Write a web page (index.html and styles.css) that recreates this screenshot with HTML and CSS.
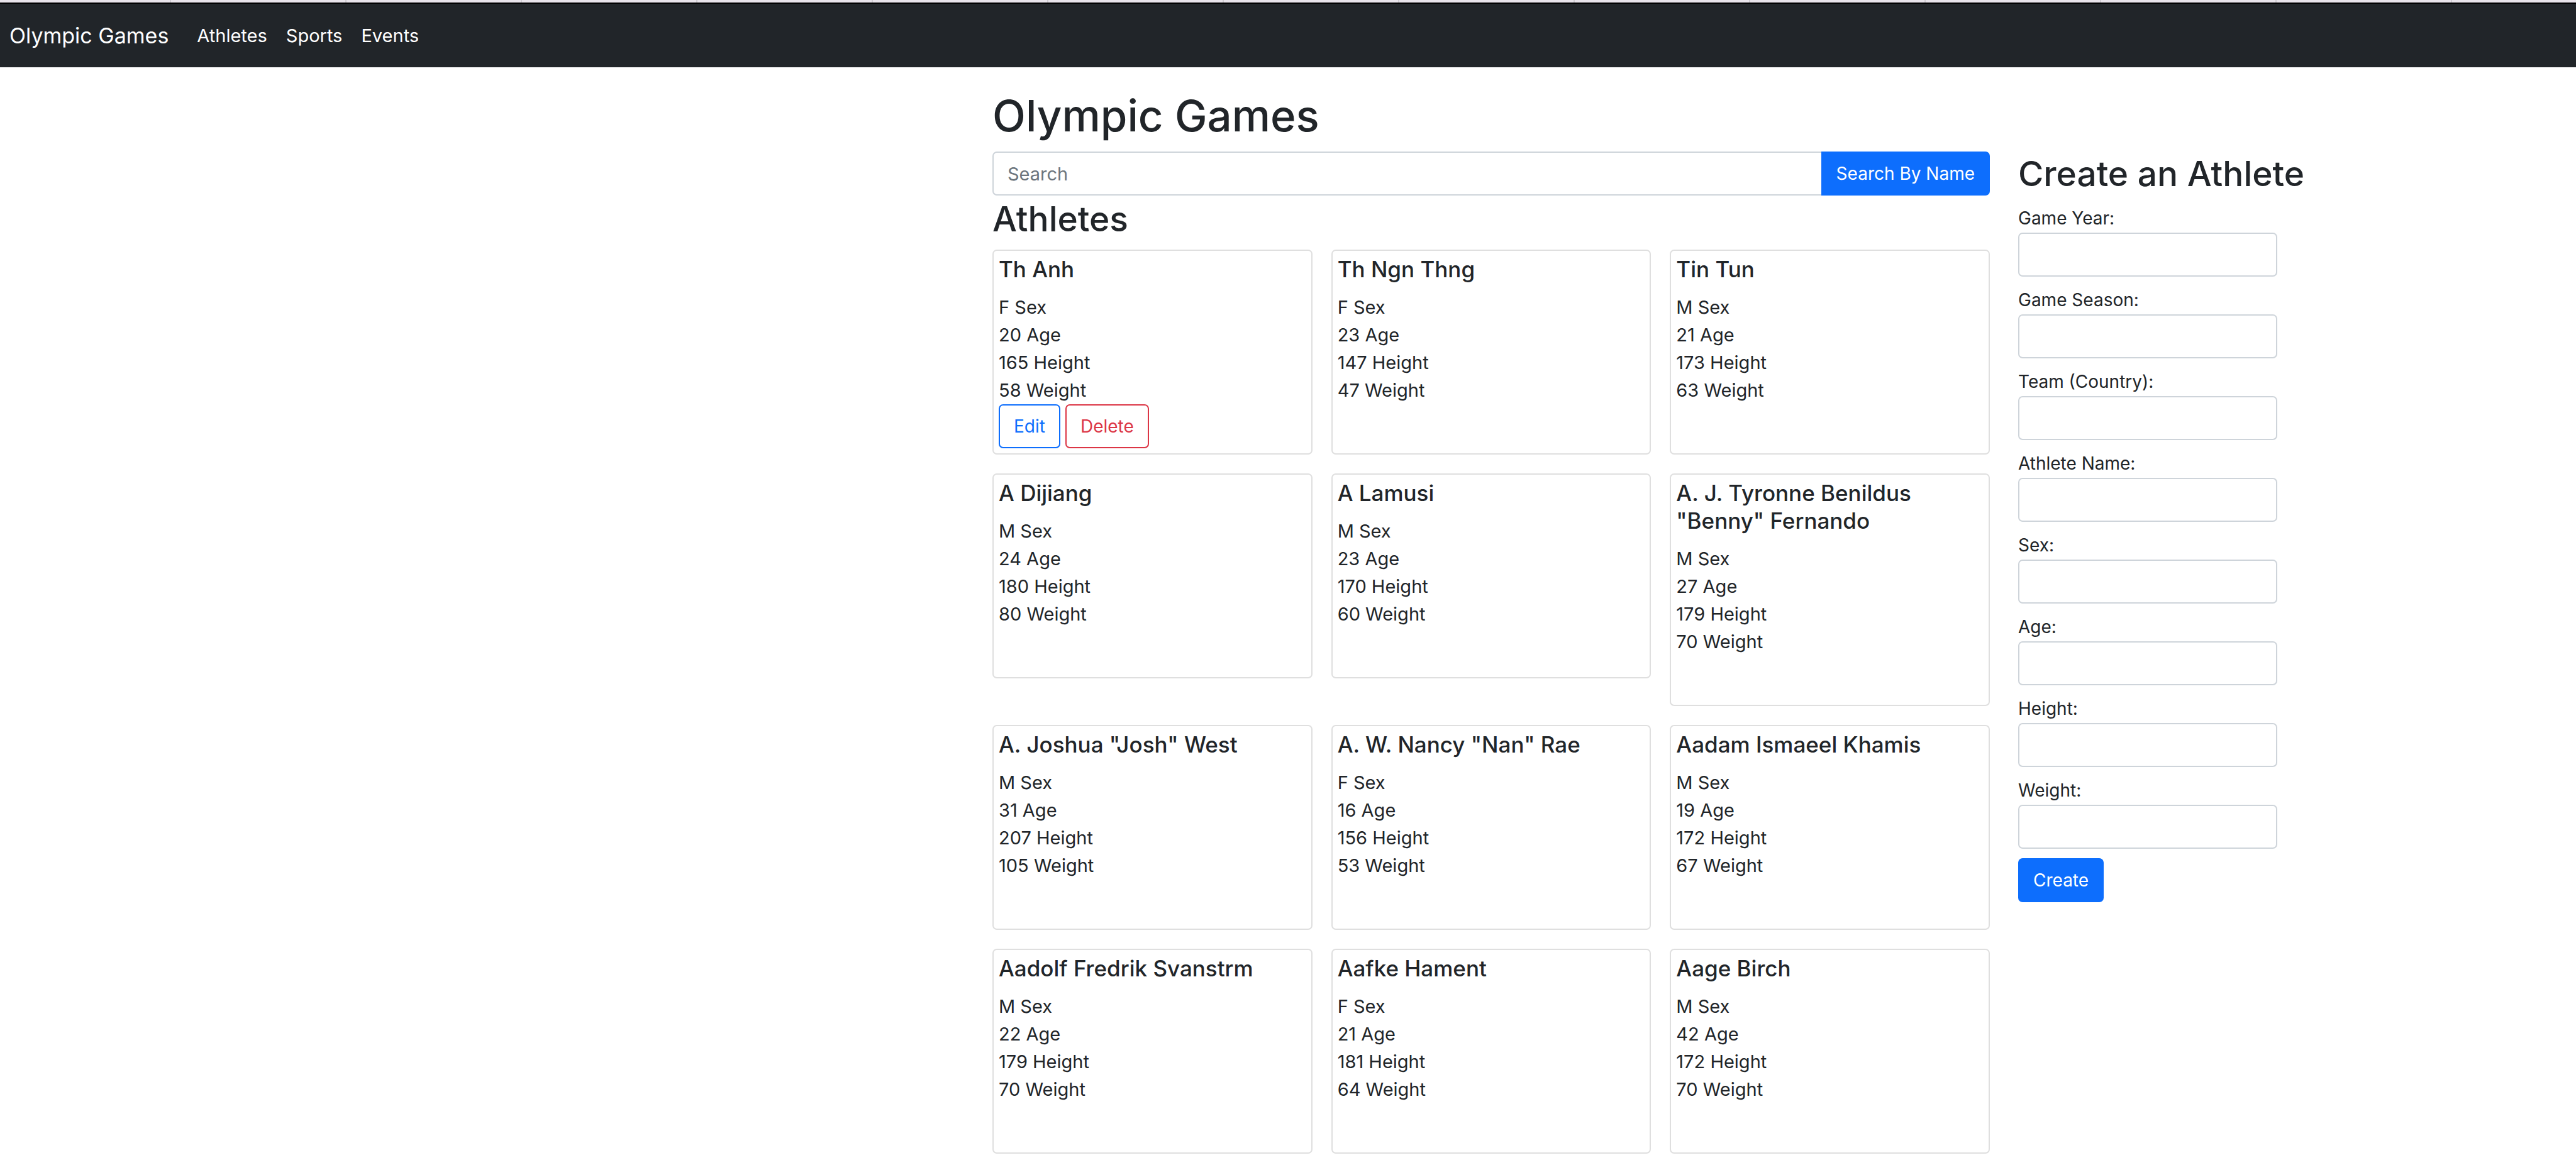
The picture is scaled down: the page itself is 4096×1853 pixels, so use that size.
FILE: index.html
```html
<!DOCTYPE html>
<html lang="en">
<head>
<meta charset="utf-8">
<title>Olympic Games</title>
<link rel="stylesheet" href="styles.css">
</head>
<body>
<div class="tab-strip"></div>
<nav class="navbar">
  <a class="brand" href="#">Olympic Games</a>
  <a class="nav-link" href="#athletes">Athletes</a>
  <a class="nav-link" href="#sports">Sports</a>
  <a class="nav-link" href="#events">Events</a>
</nav>
<div class="page">
  <main class="content">
    <h1>Olympic Games</h1>
    <form class="search">
      <input class="control" type="text" placeholder="Search" aria-label="Search">
      <button class="btn btn-primary" type="button">Search By Name</button>
    </form>
    <h2 id="athletes">Athletes</h2>
    <div class="cards">
      <article class="card"><h5>Th Anh</h5><p>F Sex</p><p>20 Age</p><p>165 Height</p><p>58 Weight</p><div class="actions"><button class="btn btn-edit" type="button">Edit</button><button class="btn btn-delete" type="button">Delete</button></div></article>
      <article class="card"><h5>Th Ngn Thng</h5><p>F Sex</p><p>23 Age</p><p>147 Height</p><p>47 Weight</p><div class="actions"></div></article>
      <article class="card"><h5>Tin Tun</h5><p>M Sex</p><p>21 Age</p><p>173 Height</p><p>63 Weight</p><div class="actions"></div></article>
      <article class="card"><h5>A Dijiang</h5><p>M Sex</p><p>24 Age</p><p>180 Height</p><p>80 Weight</p><div class="actions"></div></article>
      <article class="card"><h5>A Lamusi</h5><p>M Sex</p><p>23 Age</p><p>170 Height</p><p>60 Weight</p><div class="actions"></div></article>
      <article class="card"><h5>A. J. Tyronne Benildus "Benny" Fernando</h5><p>M Sex</p><p>27 Age</p><p>179 Height</p><p>70 Weight</p><div class="actions"></div></article>
      <article class="card"><h5>A. Joshua "Josh" West</h5><p>M Sex</p><p>31 Age</p><p>207 Height</p><p>105 Weight</p><div class="actions"></div></article>
      <article class="card"><h5>A. W. Nancy "Nan" Rae</h5><p>F Sex</p><p>16 Age</p><p>156 Height</p><p>53 Weight</p><div class="actions"></div></article>
      <article class="card"><h5>Aadam Ismaeel Khamis</h5><p>M Sex</p><p>19 Age</p><p>172 Height</p><p>67 Weight</p><div class="actions"></div></article>
      <article class="card"><h5>Aadolf Fredrik Svanstrm</h5><p>M Sex</p><p>22 Age</p><p>179 Height</p><p>70 Weight</p><div class="actions"></div></article>
      <article class="card"><h5>Aafke Hament</h5><p>F Sex</p><p>21 Age</p><p>181 Height</p><p>64 Weight</p><div class="actions"></div></article>
      <article class="card"><h5>Aage Birch</h5><p>M Sex</p><p>42 Age</p><p>172 Height</p><p>70 Weight</p><div class="actions"></div></article>
    </div>
  </main>
  <aside class="sidebar">
    <h2>Create an Athlete</h2>
    <form class="create">
      <div class="field"><label for="year">Game Year:</label><input class="control" id="year" type="text"></div>
      <div class="field"><label for="season">Game Season:</label><input class="control" id="season" type="text"></div>
      <div class="field"><label for="team">Team (Country):</label><input class="control" id="team" type="text"></div>
      <div class="field"><label for="name">Athlete Name:</label><input class="control" id="name" type="text"></div>
      <div class="field"><label for="sex">Sex:</label><input class="control" id="sex" type="text"></div>
      <div class="field"><label for="age">Age:</label><input class="control" id="age" type="text"></div>
      <div class="field"><label for="height">Height:</label><input class="control" id="height" type="text"></div>
      <div class="field"><label for="weight">Weight:</label><input class="control" id="weight" type="text"></div>
      <button class="btn btn-primary" type="button">Create</button>
    </form>
  </aside>
</div>
</body>
</html>
```
FILE: styles.css
```css
*, *::before, *::after { box-sizing: border-box; }

body {
  margin: 0;
  background: #fff;
  color: #212529;
  font-family: Inter, "Liberation Sans", sans-serif;
  font-size: 29px;
  line-height: 44px;
}

h1, h2, h5, p { margin: 0; }
h1, h2, h5 { font-weight: 500; }
h1 { font-size: 69px; line-height: 94px; margin-bottom: 10px; }
h2 { font-size: 55px; line-height: 75px; margin-bottom: 11px; }
h5 { font-size: 35px; line-height: 44px; margin-bottom: 17px; }

.tab-strip {
  height: 4px;
  background: repeating-linear-gradient(to right, #e9e4eb 0 277px, #d0ccd2 277px 279px) -7px 0 / calc(100% + 7px) 100%;
}

.navbar {
  display: flex;
  align-items: center;
  gap: 30px;
  height: 103px;
  padding: 0 15px;
  border-top: 2px solid #000;
  background: #212529;
}
.navbar a { color: #fff; text-decoration: none; }
.brand { font-size: 34px; margin-right: 15px; }

.page {
  display: grid;
  grid-template-columns: 1533fr 1586fr 887fr;
  column-gap: 45px;
  padding: 30px 0;
}
.content { grid-column: 2; }
.sidebar { grid-column: 3; padding-top: 102px; }

.control {
  width: 100%;
  height: 70px;
  padding: 0 22px;
  border: 2px solid #ced4da;
  border-radius: 7px;
  background: #fff;
  color: inherit;
  font: inherit;
}
.control::placeholder { color: #6c757d; opacity: 1; }

.btn {
  height: 70px;
  padding: 0 22px;
  border: 2px solid;
  border-radius: 7px;
  background: transparent;
  font: inherit;
  font-size: 28px;
  white-space: nowrap;
}
.btn-primary { border-color: #0d6efd; background: #0d6efd; color: #fff; }
.btn-edit { color: #0d6efd; }
.btn-delete { color: #dc3545; }

.search { display: flex; }
.search .control { flex: 1; border-right: 0; border-radius: 7px 0 0 7px; }
.search .btn { border-radius: 0 7px 7px 0; }

.cards {
  display: grid;
  grid-template-columns: repeat(3, 1fr);
  align-items: start;
  gap: 30px;
}
.card {
  padding: 7px 8px;
  border: 2px solid #dfdfdf;
  border-radius: 7px;
}
.actions { display: flex; gap: 8px; height: 71px; }

.create { max-width: 412px; }
.field { margin-bottom: 15px; }
.field label { display: block; height: 45px; font-size: 28px; }
.field .control { display: block; }
```
